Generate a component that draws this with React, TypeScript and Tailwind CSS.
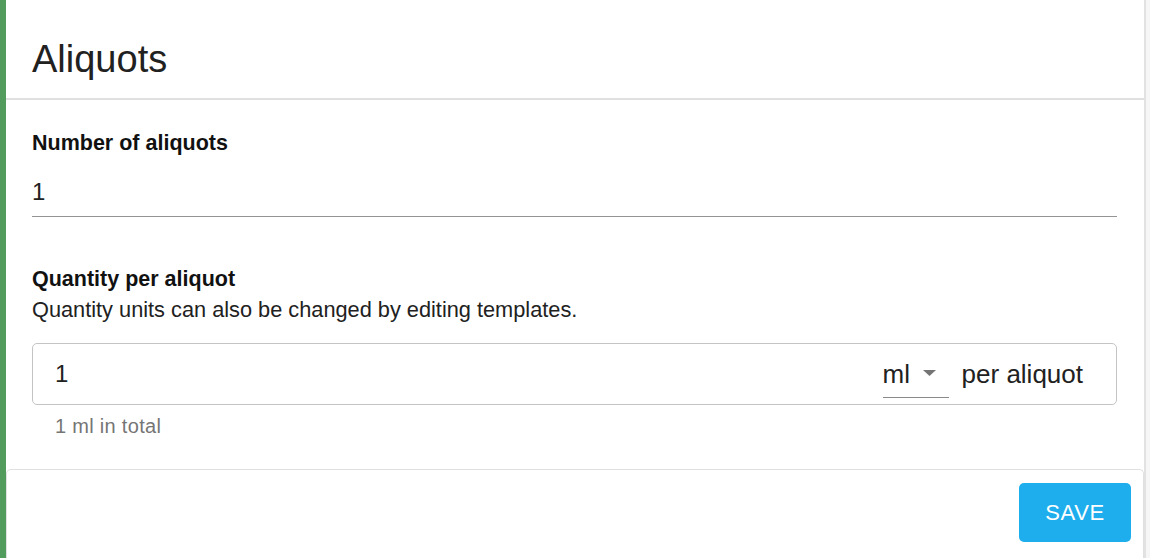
import { useState } from 'react';

export default function App() {
  const [count, setCount] = useState('1');
  const [qty, setQty] = useState('1');

  return (
    <div className="flex h-[558px] w-[1150px] overflow-hidden bg-[#f6f6f6] font-['Liberation_Sans',Arial,sans-serif] text-[#212121]">
      <div className="w-[6px] shrink-0 bg-[#519b5c]" />

      <div className="flex w-[1140px] shrink-0 flex-col border-r-2 border-[#e2e2e2] bg-white">
        <header className="h-[100px] shrink-0 border-b-2 border-[#e0e0e0] px-[26px] pt-[40px]">
          <h1 className="text-[38px] leading-none">Aliquots</h1>
        </header>

        <div className="flex-1 pl-[26px] pr-[27px]">
          <label className="mt-[33px] block text-[21.5px] font-bold leading-none text-[#111]">Number of aliquots</label>
          <div className="mt-[25px] border-b border-[#949494] pb-[12px]">
            <input
              value={count}
              onChange={(e) => setCount(e.target.value)}
              className="block h-[24px] w-full bg-transparent text-[24px] leading-none outline-none"
            />
          </div>

          <label className="mt-[52px] block text-[21.5px] font-bold leading-none text-[#111]">Quantity per aliquot</label>
          <p className="mt-[9px] text-[21.75px] leading-none">Quantity units can also be changed by editing templates.</p>

          <div className="mt-[22px] flex h-[62px] items-center rounded-[5px] border border-[#c4c4c4] pl-[22px] pr-[33px]">
            <input
              value={qty}
              onChange={(e) => setQty(e.target.value)}
              className="block h-[24px] min-w-0 flex-1 bg-transparent text-[24px] leading-none outline-none"
            />
            <div className="mb-[6px] flex h-[38px] w-[66px] items-end self-end border-b border-[#8a8a8a] pb-[10px]">
              <span className="text-[26px] leading-none">ml</span>
              <svg width="13" height="6" viewBox="0 0 13 6" className="mb-[11px] ml-[13px]">
                <path d="M0 0h13L6.5 6z" fill="#757575" />
              </svg>
            </div>
            <span className="ml-[13px] text-[26px] leading-none">per aliquot</span>
          </div>
          <p className="mt-[11px] pl-[23px] text-[20px] leading-none tracking-[0.3px] text-[#757575]">1 ml in total</p>
        </div>

        <footer className="flex h-[89px] shrink-0 items-start justify-end rounded-t-[5px] border border-b-0 border-[#e0e0e0] pr-[12px] pt-[13px]">
          <button className="h-[59px] w-[112px] rounded-[5px] bg-[#1eaeed] text-[22px] tracking-[0.6px] text-white">
            SAVE
          </button>
        </footer>
      </div>
    </div>
  );
}
